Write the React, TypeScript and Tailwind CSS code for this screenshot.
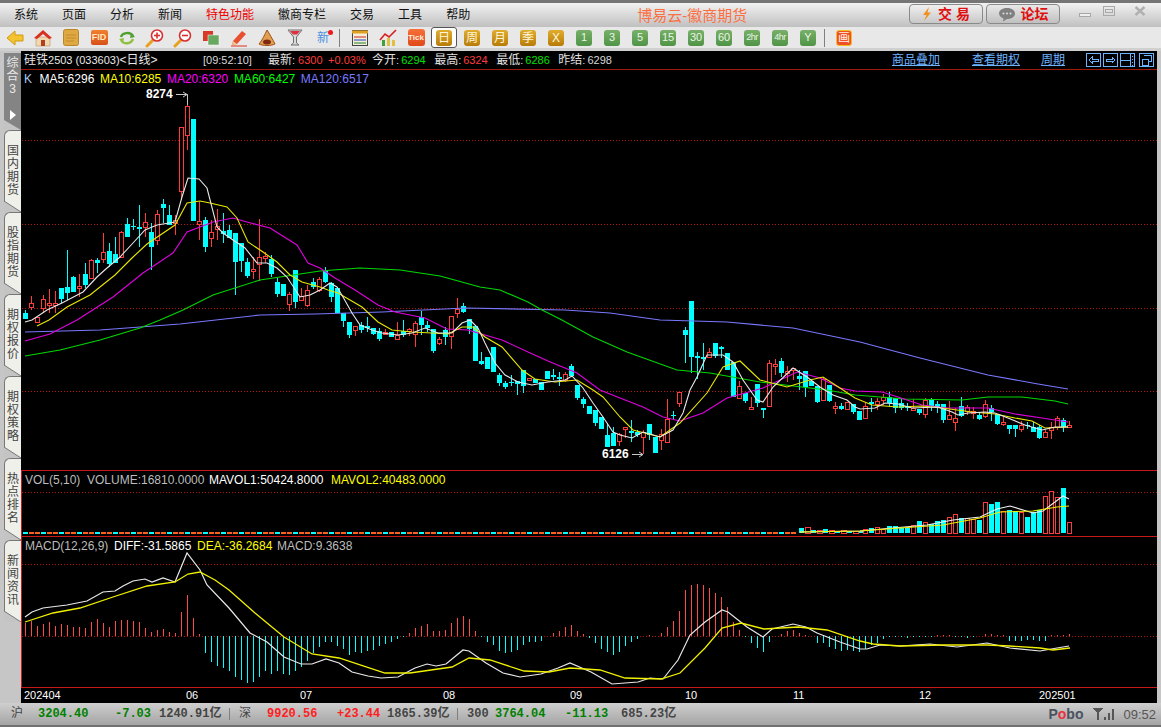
import React from 'react';

type Row = [string, number, number, number, number];
type Candle = { x: number; kind: string; top: number; bot: number; hi: number; lo: number };

// 行情数据,按截图放大坐标抄录: 每段给起始 x 与 y 偏移
const seg = (startX: number, y0: number, rows: Row[]): Candle[] =>
    rows.map((r, i) => ({
        x: startX + i * 6,
        kind: r[0],
        top: y0 + r[1] / 3,
        bot: y0 + r[2] / 3,
        hi: y0 + r[3] / 3,
        lo: y0 + r[4] / 3,
    }));

const candles: Candle[] = [
    ...seg(25, 100, [
        ['c', 640, 658, 630, 658], ['r', 610, 623, 588, 630], ['r', 652, 668, 652, 668], ['r', 598, 625, 585, 640],
        ['r', 610, 615, 568, 640], ['r', 610, 615, 572, 640], ['c', 565, 597, 565, 610], ['c', 560, 578, 450, 600],
        ['c', 530, 575, 527, 575], ['r', 558, 566, 522, 590], ['c', 522, 555, 490, 565], ['r', 482, 535, 478, 535],
        ['c', 480, 488, 475, 520], ['r', 457, 478, 400, 490], ['c', 453, 492, 430, 500], ['c', 462, 490, 410, 490],
        ['r', 397, 472, 393, 475], ['c', 372, 410, 355, 410], ['c', 378, 381, 358, 390], ['c', 381, 388, 315, 440],
        ['r', 367, 382, 340, 410], ['c', 396, 440, 370, 510], ['r', 343, 421, 330, 435], ['c', 312, 323, 297, 370],
        ['c', 346, 374, 315, 375], ['r', 362, 369, 345, 405], ['r', 82, 275, 82, 300], ['r', 20, 106, -18, 150],
        ['c', 57, 362, 57, 362], ['r', 365, 373, 305, 420], ['c', 360, 442, 350, 455], ['r', 397, 415, 360, 440],
        ['r', 380, 387, 328, 420], ['c', 393, 403, 340, 428], ['c', 390, 413, 375, 415], ['c', 400, 485, 400, 585],
        ['c', 430, 484, 430, 515], ['c', 485, 527, 475, 535], ['r', 508, 513, 470, 537], ['r', 472, 492, 357, 543],
        ['r', 468, 475, 455, 488], ['c', 477, 522, 465, 530], ['c', 546, 582, 535, 590], ['c', 552, 587, 552, 587],
        ['r', 582, 613, 575, 632], ['c', 510, 605, 510, 625], ['r', 588, 602, 565, 603], ['r', 571, 617, 555, 620],
        ['c', 545, 562, 535, 568], ['r', 538, 570, 530, 575],
    ]),
    ...seg(325, 290, [
        ['c', -60, -25, -70, -20], ['c', -20, 22, -25, 35], ['c', -5, 68, -10, 68], ['c', 70, 93, 70, 110],
        ['c', 95, 135, 95, 143], ['r', 108, 122, 108, 137], ['c', 104, 120, 95, 128], ['c', 108, 114, 82, 125],
        ['c', 113, 133, 113, 135], ['c', 122, 148, 115, 153], ['r', 127, 133, 116, 135], ['c', 127, 140, 127, 140],
        ['r', 135, 149, 96, 150], ['c', 124, 135, 90, 140], ['r', 117, 122, 113, 138], ['r', 100, 134, 93, 170],
        ['c', 82, 105, 62, 135], ['c', 105, 115, 92, 125], ['c', 118, 183, 118, 188], ['r', 147, 159, 140, 165],
        ['c', 120, 140, 112, 165], ['r', 79, 140, 79, 177], ['r', 57, 71, 24, 85], ['c', 48, 65, 40, 68],
        ['c', 88, 118, 88, 132], ['c', 108, 212, 108, 212], ['c', 213, 221, 186, 225], ['c', 201, 237, 201, 237],
        ['c', 171, 245, 171, 245], ['c', 255, 278, 250, 288], ['c', 279, 291, 272, 297], ['c', 276, 279, 255, 287],
        ['c', 272, 282, 272, 315], ['c', 240, 288, 240, 308], ['r', 264, 272, 264, 272], ['c', 267, 278, 267, 278],
        ['c', 275, 300, 275, 300], ['c', 244, 267, 244, 267], ['c', 255, 261, 237, 270], ['c', 262, 268, 247, 288],
    ]),
    ...seg(565, 290, [
        ['r', 253, 270, 247, 275], ['c', 229, 258, 222, 262], ['c', 286, 324, 286, 330], ['c', 328, 342, 322, 354],
        ['c', 348, 372, 348, 372], ['c', 360, 400, 360, 408], ['c', 381, 416, 381, 416], ['c', 435, 470, 400, 470],
        ['c', 428, 467, 412, 468], ['r', 432, 455, 428, 467], ['r', 412, 417, 412, 445], ['c', 424, 428, 390, 455],
        ['c', 427, 436, 420, 440], ['r', 428, 443, 420, 493], ['c', 403, 436, 403, 450], ['c', 440, 488, 440, 488],
        ['r', 432, 452, 418, 480], ['r', 388, 458, 328, 458], ['c', 375, 377, 362, 386], ['r', 306, 339, 306, 352],
        ['c', 120, 134, 112, 218], ['c', 33, 200, 33, 250], ['c', 198, 205, 185, 268], ['c', 202, 206, 158, 240],
        ['r', 188, 203, 175, 205], ['c', 160, 198, 160, 205], ['c', 171, 178, 168, 205], ['c', 190, 240, 190, 240],
        ['c', 215, 320, 215, 320], ['r', 289, 326, 272, 326], ['c', 310, 333, 310, 340], ['r', 352, 356, 322, 356],
        ['c', 282, 340, 282, 352], ['c', 353, 360, 353, 383], ['r', 220, 348, 210, 348], ['r', 223, 230, 208, 256],
        ['c', 213, 250, 205, 262], ['r', 244, 250, 228, 275], ['r', 236, 240, 235, 270], ['c', 258, 268, 240, 300],
        ['c', 243, 290, 243, 322], ['c', 272, 288, 272, 288], ['c', 288, 336, 288, 340], ['r', 268, 331, 262, 331],
        ['c', 285, 333, 285, 335], ['r', 350, 352, 335, 372], ['c', 347, 357, 340, 360], ['r', 337, 358, 337, 360],
        ['c', 342, 365, 342, 372], ['c', 362, 390, 362, 390],
    ]),
    ...seg(865, 375, [
        ['r', 94, 130, 80, 130], ['c', 82, 88, 68, 110], ['r', 80, 88, 70, 105], ['r', 66, 76, 57, 90],
        ['c', 65, 85, 52, 95], ['c', 68, 98, 68, 115], ['c', 85, 100, 72, 105], ['c', 97, 100, 85, 107],
        ['r', 100, 104, 72, 108], ['c', 102, 115, 102, 120], ['r', 76, 118, 70, 128], ['c', 75, 92, 70, 107],
        ['c', 88, 100, 78, 115], ['c', 88, 135, 88, 143], ['r', 120, 133, 78, 133], ['r', 130, 143, 100, 167],
        ['c', 94, 122, 67, 125], ['r', 98, 108, 90, 120], ['r', 108, 112, 95, 132], ['c', 120, 132, 110, 135],
        ['r', 88, 125, 75, 130], ['c', 100, 112, 90, 137], ['c', 117, 147, 117, 150], ['r', 142, 149, 125, 152],
        ['c', 150, 162, 150, 177], ['c', 150, 162, 150, 186], ['r', 152, 164, 138, 172], ['c', 151, 154, 140, 162],
        ['c', 155, 170, 140, 172], ['c', 155, 190, 150, 192], ['r', 171, 187, 165, 187], ['r', 158, 165, 140, 192],
        ['r', 131, 157, 124, 165], ['c', 136, 157, 128, 172], ['r', 151, 154, 138, 160],
    ]),
];

const ma5 = '25,322 32,320 47,310 62,303 83,292 97,277 107,268 120,257 133,243 145,230 157,225 175,222 182,197 188,178 199,179 207,188 217,227 223,233 233,240 245,248 257,263 267,263 277,268 287,277 300,297 310,295 320,290 330,283 337,287 343,297 352,313 360,325 372,330 382,333 398,335 412,333 425,328 438,333 452,333 462,323 470,320 478,328 485,343 495,363 505,375 518,382 532,385 548,382 565,380 572,376 583,388 593,403 603,417 613,432 620,435 632,438 643,432 660,437 673,430 683,413 690,390 697,377 707,355 723,355 733,362 743,380 757,400 763,402 773,387 793,368 807,377 820,387 833,395 847,400 855,407 860,409 875,408 885,403 898,404 912,408 938,407 952,412 958,415 968,413 985,412 995,413 1008,418 1025,425 1042,430 1055,427 1068,427';
const ma10 = '37,326 49,320 67,307 90,295 115,275 132,258 147,244 175,225 187,203 200,201 210,203 227,207 237,218 248,242 263,252 277,262 290,275 302,282 320,287 328,290 338,293 362,307 378,322 392,330 412,332 432,333 448,334 462,327 473,327 485,337 502,347 522,370 535,379 555,382 577,380 593,390 603,397 620,417 633,430 660,437 680,423 707,393 723,367 740,361 760,380 787,387 810,380 823,377 840,388 855,398 872,405 898,407 922,406 942,408 972,412 995,414 1015,418 1032,421 1045,428 1068,427';
const ma20 = '25,341 50,334 77,320 113,297 143,273 173,253 187,232 213,222 233,218 247,222 270,228 297,245 308,263 320,268 335,278 355,290 378,305 395,312 425,318 447,329 468,330 502,340 528,352 548,361 577,373 600,390 620,398 643,407 663,417 680,421 703,413 727,398 763,388 797,372 820,378 840,388 855,391 882,392 898,397 922,405 948,408 988,408 1015,414 1042,418 1068,422';
const ma60 = '25,356 60,350 100,340 140,328 160,320 183,310 213,295 260,280 320,271 360,268 400,270 440,276 480,287 500,290 528,302 542,310 560,319 593,337 627,352 677,370 710,373 760,382 827,390 855,395 905,399 962,400 988,397 1022,397 1055,401 1068,404';
const ma120 = '25,332 100,330 180,324 260,315 315,314 382,312 465,308 565,310 610,313 660,320 727,322 793,328 860,342 920,358 988,375 1038,384 1068,389';

const volWhite = '800,532 860,531 893,528 927,525 953,520 980,517 997,509 1010,506 1033,513 1043,511 1063,496 1069,499';
const volYellow = '800,532 860,531 900,528 943,525 980,518 1000,512 1033,511 1057,507 1069,506';

const diff = '25,617 32,612 43,608 67,605 87,601 103,592 115,591 123,586 133,581 145,579 152,582 163,578 175,582 187,553 200,570 207,585 229,608 250,633 267,642 284,657 301,664 312,664 326,659 339,663 352,672 368,676 381,678 398,677 415,668 427,664 436,666 446,664 463,650 469,651 486,663 503,673 520,677 541,674 558,668 570,663 591,672 612,684 638,682 650,678 663,679 678,660 690,635 705,622 722,610 728,612 747,627 763,637 772,629 793,624 806,627 817,633 840,642 860,649 867,649 880,645 900,646 930,644 957,647 987,643 1010,648 1040,651 1057,648 1069,646';
const dea = '25,622 53,613 80,608 113,597 147,586 175,582 188,574 200,572 215,580 229,590 255,613 284,637 312,654 339,658 385,673 410,673 452,667 469,658 490,660 524,671 549,672 570,668 600,670 625,678 661,679 680,673 705,648 722,628 741,623 764,629 798,627 827,630 860,641 873,644 900,646 943,645 987,645 1010,646 1040,648 1053,650 1070,648';

// MACD 柱: x=25 起的高度(像素)
const macdHead = [13, 15, 10, 12, 14, 10, 12, 11, 9, 9, 8, 14, 17, 13, 9, 15, 16, 16, 15, 14, 8, 4, 6, 7, 4, 3, 24, 41, 18, 2];
const macdMid = [218, 243, 255, 262, 272, 290, 298, 308, 303, 288, 272, 280, 270, 280, 282, 272, 258, 240, 218, 198, 185, 184, 195, 205, 222, 215, 218, 210, 207, 195, 190, 183, 175, 168, 158, 143, 137, 131, 150, 150, 147, 128, 112, 105, 116, 150, 170, 185, 192, 210, 218, 213, 207, 192, 185, 183, 180, 167, 156, 150, 140, 134, 150, 160, 173, 187, 205, 215, 222, 215, 195, 185, 175, 166, 163, 165, 158, 138, 120, 90, 27, 12, 9, 13, 22, 38, 49, 78, 123, 147, 170, 188, 203, 215, 183, 165, 160, 152, 148, 158, 163, 165, 188, 188, 198, 205, 210, 208, 210, 215].map((z) => (166 - z) / 3);
const macdTail = [-13, -9, -7, -3, -1, -1, -1, -2, -1, -1, -1, -1, 1, 1, 1, -1, -1, -2, -1, 0, 2, 2, 1, 1, -5, -5, -5, -4, -4, -5, -5, 1, 1, 1, 2];
const macdBars = [...macdHead, ...macdMid, ...macdTail];

// 成交量: x=795 起的高度
const volEarly = [5, 6, 3, 3, 4, 3, 2, 3, 2, 2, 2];
const volLate: [string, number][] = [['r', 178], ['c', 174], ['r', 172], ['r', 177], ['c', 168], ['c', 168], ['c', 172], ['c', 172], ['r', 166], ['c', 153], ['r', 157], ['c', 162], ['c', 153], ['c', 150], ['r', 142], ['r', 133], ['c', 142], ['r', 145], ['r', 147], ['c', 148], ['r', 97], ['c', 102], ['c', 96], ['r', 122], ['c', 120], ['c', 122], ['r', 127], ['c', 140], ['c', 125], ['c', 118], ['r', 79], ['r', 64], ['r', 82], ['c', 54], ['r', 157]];

const RED = '#ff3c3c';
const CYAN = '#00ffff';

const GridLine = ({ y }: { y: number }) => (
    <line x1="22" x2="1157" y1={y + 0.5} y2={y + 0.5} stroke="#b81414" strokeDasharray="1 2" shapeRendering="crispEdges" />
);

const Line = ({ points, color, width = 1.1 }: { points: string; color: string; width?: number }) => (
    <polyline points={points} fill="none" stroke={color} strokeWidth={width} />
);

const CandleMark = ({ c }: { c: Candle }) => {
    const mid = c.x + 0.5;
    if (c.kind === 'c') {
        return (
            <g shapeRendering="crispEdges">
                <line x1={mid} x2={mid} y1={c.hi} y2={c.lo} stroke={CYAN} />
                <rect x={c.x - 2} y={c.top} width="5" height={Math.max(c.bot - c.top, 1)} fill={CYAN} />
            </g>
        );
    }
    return (
        <g shapeRendering="crispEdges">
            <line x1={mid} x2={mid} y1={c.hi} y2={c.top} stroke={RED} />
            <line x1={mid} x2={mid} y1={c.bot} y2={c.lo} stroke={RED} />
            <rect x={c.x - 1.5} y={c.top} width="4" height={Math.max(c.bot - c.top, 2)} fill="#000" stroke={RED} />
        </g>
    );
};

const menus = ['系统', '页面', '分析', '新闻', '特色功能', '徽商专栏', '交易', '工具', '帮助'];

const IconBox = ({ children }: { children: React.ReactNode }) => (
    <div className="flex h-[22px] w-[28px] shrink-0 items-center justify-center">{children}</div>
);

const Gold = ({ t, active }: { t: string; active?: boolean }) => (
    <div className={active ? 'mx-px flex h-[21px] w-[26px] shrink-0 items-center justify-center rounded-[3px] border border-[#555] bg-white' : 'flex h-[22px] w-[28px] shrink-0 items-center justify-center'}>
        <div className="flex h-[16px] w-[16px] items-center justify-center rounded-[3px] bg-gradient-to-b from-[#e0ad2c] to-[#b87c08] text-[12px] leading-none text-[#fff6d8]">{t}</div>
    </div>
);

const Green = ({ t }: { t: string }) => (
    <IconBox>
        <div className={t.length > 2 ? 'flex h-[16px] w-[16px] items-center justify-center rounded-[3px] bg-gradient-to-b from-[#78b068] to-[#4f9447] text-[9px] leading-none tracking-[-0.5px] text-[#eaf5e4]' : 'flex h-[16px] w-[16px] items-center justify-center rounded-[3px] bg-gradient-to-b from-[#78b068] to-[#4f9447] text-[11px] leading-none text-[#eaf5e4]'}>{t}</div>
    </IconBox>
);

const Magnifier = ({ plus }: { plus?: boolean }) => (
    <svg width="20" height="20" viewBox="0 0 20 20">
        <path d="M8 12 L2 18" stroke="#e8a020" strokeWidth="3" strokeLinecap="round" />
        <circle cx="12" cy="7.5" r="5.5" fill="#fff" stroke="#d83030" strokeWidth="1.6" />
        <path d="M9 7.5 H15" stroke="#d83030" strokeWidth="1.6" />
        {plus && <path d="M12 4.5 V10.5" stroke="#d83030" strokeWidth="1.6" />}
    </svg>
);

const Toolbar = () => (
    <div className="flex h-[21px] items-center bg-[#e8e8e8] pl-px">
        <IconBox>
            <svg width="18" height="16" viewBox="0 0 18 16"><path d="M1 8 L9 1 V5 H17 V11 H9 V15 Z" fill="#f4c430" stroke="#d09a10" /></svg>
        </IconBox>
        <IconBox>
            <svg width="20" height="18" viewBox="0 0 20 18"><path d="M3 8 V17 H17 V8 Z" fill="#f0d8b0" stroke="#c09060" strokeWidth="0.6" /><rect x="8" y="11" width="4" height="6" fill="#b04020" /><path d="M1 9 L10 1 L19 9 L16 10 L10 5 L4 10 Z" fill="#d83020" /></svg>
        </IconBox>
        <IconBox>
            <svg width="16" height="17" viewBox="0 0 16 17"><rect x="0.5" y="0.5" width="15" height="16" rx="2" fill="#e0a840" stroke="#b8862a" /><path d="M3 6 H13 M3 9 H13 M3 12 H11" stroke="#c08c30" /></svg>
        </IconBox>
        <IconBox>
            <div className="flex h-[15px] w-[17px] items-center justify-center rounded-[2px] bg-gradient-to-b from-[#f08030] to-[#d85018] text-[9px] font-bold leading-none text-[#ffe8c0]">FID</div>
        </IconBox>
        <IconBox>
            <svg width="18" height="16" viewBox="0 0 18 16" fill="none" strokeWidth="2.4"><path d="M3 7 C4 3 12 1 15 6" stroke="#50a030" /><path d="M15 9 C13 14 6 15 3 10" stroke="#90c040" /><path d="M13 3 L17 7 L12 8 Z" fill="#50a030" /><path d="M5 13 L1 9 L6 8 Z" fill="#90c040" /></svg>
        </IconBox>
        <IconBox><Magnifier plus /></IconBox>
        <IconBox><Magnifier /></IconBox>
        <IconBox>
            <svg width="18" height="16" viewBox="0 0 18 16"><rect x="1" y="1" width="10" height="10" fill="#d83828" /><rect x="6" y="5" width="11" height="10" fill="#68a860" stroke="#fff" strokeWidth="0.5" /></svg>
        </IconBox>
        <IconBox>
            <svg width="18" height="18" viewBox="0 0 18 18"><path d="M3 12 L12 2 L16 5 L7 15 L2 16 Z" fill="#e85030" /><path d="M3 12 L7 15 L2 16 Z" fill="#f0c890" /><path d="M1 17 H17" stroke="#e03020" /></svg>
        </IconBox>
        <IconBox>
            <svg width="18" height="18" viewBox="0 0 18 18"><path d="M9 1 C11 4 15 11 17 15 C13 17 5 17 1 15 C4 12 7 5 9 1 Z" fill="#e0a050" stroke="#a05018" /><ellipse cx="9" cy="13" rx="4" ry="2.5" fill="#802810" /></svg>
        </IconBox>
        <IconBox>
            <svg width="16" height="17" viewBox="0 0 16 17"><path d="M1 1 H15 L9.5 8 V14 L12 16 H4 L6.5 14 V8 Z" fill="#d8d8d8" stroke="#707070" /><path d="M3 2 H13 L10 5.5 H6 Z" fill="#e03040" /></svg>
        </IconBox>
        <IconBox>
            <div className="relative text-[12px] leading-none text-[#4a90e0]">
                新
                <div className="absolute -right-[4px] -top-[2px] h-[5px] w-[5px] rounded-full bg-[#f01818]" />
            </div>
        </IconBox>
        <div className="ml-[2px] mr-[6px] h-[18px] w-px bg-[#808080]" />
        <IconBox>
            <svg width="16" height="16" viewBox="0 0 16 16"><rect x="0.5" y="0.5" width="15" height="15" fill="#f4f0d8" stroke="#444" /><path d="M0 2 H16" stroke="#e0a020" strokeWidth="3" /><path d="M2 7 H14" stroke="#d02020" /><path d="M2 10 H14" stroke="#2040c0" /><path d="M2 13 H14" stroke="#208030" /></svg>
        </IconBox>
        <IconBox>
            <svg width="18" height="17" viewBox="0 0 18 17"><rect x="3" y="11" width="3" height="6" fill="#40a040" /><rect x="8" y="9" width="3" height="8" fill="#e0c040" /><rect x="13" y="11" width="3" height="6" fill="#e0c040" /><path d="M1 11 L6 5 L10 8 L17 1" fill="none" stroke="#d82020" strokeWidth="1.6" /></svg>
        </IconBox>
        <IconBox>
            <div className="flex h-[17px] w-[17px] items-center justify-center rounded-[3px] bg-gradient-to-b from-[#f87038] to-[#e04818] text-[8px] font-bold leading-none text-[#fff0e0]">Tick</div>
        </IconBox>
        <Gold t="日" active />
        {['周', '月', '季', 'X'].map((t) => (
            <Gold key={t} t={t} />
        ))}
        {['1', '3', '5', '15', '30', '60', '2hr', '4hr', 'Y'].map((t) => (
            <Green key={t} t={t} />
        ))}
        <div className="ml-[2px] mr-[5px] h-[18px] w-px bg-[#808080]" />
        <IconBox>
            <div className="flex h-[16px] w-[16px] items-center justify-center rounded-[3px] border border-[#f0c020] bg-[#f05028] text-[12px] leading-none text-[#fff0e0]">画</div>
        </IconBox>
    </div>
);

const MenuBar = () => (
    <div className="flex h-[24px] items-center bg-gradient-to-b from-[#f2f2f2] to-[#c0c0c0] pl-[14px]">
        <div className="flex gap-[24px] text-[12px] text-[#111]">
            {menus.map((m) => (
                <span key={m} className={m === '特色功能' ? 'text-[#f00000]' : ''}>{m}</span>
            ))}
        </div>
        <div className="ml-[167px] text-[15px] leading-none text-[#fb7043]">博易云-徽商期货</div>
        <div className="ml-auto flex items-center pb-[2px]">
            <div className="flex h-[20px] w-[74px] items-center justify-center gap-[6px] rounded-[4px] border border-[#8a8a8a] bg-gradient-to-b from-[#f0f0f0] to-[#c8c8c8] text-[14px] font-bold leading-none text-[#e01010]">
                <svg width="10" height="14" viewBox="0 0 10 14"><path d="M7 0 L1 8 H4.5 L2 14 L9 5.5 H5.5 Z" fill="#f09020" /></svg>
                <span>交 易</span>
            </div>
            <div className="ml-[3px] flex h-[20px] w-[74px] items-center justify-center gap-[5px] rounded-[4px] border border-[#8a8a8a] bg-gradient-to-b from-[#e8e8e8] to-[#c0c0c0] text-[14px] font-bold leading-none text-[#e01010]">
                <svg width="18" height="15" viewBox="0 0 18 15"><path d="M9 1 C14 1 17 3.5 17 6.5 C17 9.5 14 12 9 12 L5 14.5 L5.5 11.5 C3 10.5 1 8.8 1 6.5 C1 3.5 4 1 9 1 Z" fill="#808080" /><circle cx="5.5" cy="6.5" r="1" fill="#e0e0e0" /><circle cx="9" cy="6.5" r="1" fill="#e0e0e0" /><circle cx="12.5" cy="6.5" r="1" fill="#e0e0e0" /></svg>
                <span>论坛</span>
            </div>
            <div className="ml-[19px] mr-[15px] flex items-start gap-[12px]">
                <div className="mt-[7px] h-[4px] w-[12px] border border-[#a8a8a8] bg-[#eee]" />
                <div className="mb-[6px] flex h-[10px] w-[12px] items-center justify-center border border-[#a8a8a8]"><div className="h-[4px] w-[8px] border border-[#a8a8a8]" /></div>
                <svg className="ml-[7px]" width="12" height="10" viewBox="0 0 12 10"><path d="M1.5 1 L10.5 9 M10.5 1 L1.5 9" stroke="#b0b0b0" strokeWidth="2.4" /></svg>
            </div>
        </div>
    </div>
);

const Fold = () => (
    <svg className="absolute -left-px bottom-0" width="17" height="11" viewBox="0 0 17 11">
        <path d="M0 0 L17 11 H0 Z" fill="#c4c4c4" />
        <path d="M0 0 L17 11" stroke="#777" />
    </svg>
);

const SideTab = ({ text }: { text: string }) => (
    <div className="relative flex h-[82px] w-[17px] flex-col items-center rounded-tl-[6px] border-l border-t border-[#777] bg-[#f0f0ea] pt-[14px] text-[12px] leading-[13px] text-[#444]">
        {text.split('').map((ch, i) => (
            <span key={i}>{ch}</span>
        ))}
        <Fold />
    </div>
);

const Sidebar = () => (
    <div className="flex w-[21px] shrink-0 flex-col bg-[#c6c6c6] pl-[4px] pt-[2px]">
        <div className="relative flex h-[77px] w-[17px] flex-col items-center bg-[#848484] pt-[4px] text-[12px] leading-[13px] text-[#e8e8e8]">
            <span>综</span>
            <span>合</span>
            <span>3</span>
            <svg className="mt-[14px]" width="6" height="10" viewBox="0 0 6 10"><path d="M0 0 L6 5 L0 10 Z" fill="#fff" /></svg>
            <svg className="absolute bottom-0 left-0" width="17" height="10" viewBox="0 0 17 10"><path d="M0 0 L17 10 H0 Z" fill="#c4c4c4" /></svg>
        </div>
        {['国内期货', '股指期货', '期权报价', '期权策略', '热点排名', '新闻资讯'].map((t) => (
            <SideTab key={t} text={t} />
        ))}
    </div>
);

const BlueBox = ({ children }: { children: React.ReactNode }) => (
    <svg width="15" height="14" viewBox="0 0 15 14" fill="none" stroke="#6db4ff" shapeRendering="crispEdges">
        <rect x="0.5" y="0.5" width="14" height="13" />
        {children}
    </svg>
);

const Label = ({ children }: { children: React.ReactNode }) => <span className="text-[12px] text-[#e0e0e0]">{children}</span>;

const QuoteHeader = () => (
    <div className="flex h-[19px] items-center border-b border-[#a01808] pl-[3px] pr-[3px] text-[11px] leading-none text-[#d8d8d8]">
        <span className="w-[179px] text-[11px] text-[#e8e8e8]">
            <span className="text-[12px]">硅铁</span>2503 (033603)<span className="text-[12px]">&lt;日线&gt;</span>
        </span>
        <span className="w-[65px]">[09:52:10]</span>
        <Label>最新</Label>:<span className="ml-[3px] w-[30px] text-[#ff3c3c]">6300</span>
        <span className="w-[44px] text-[#ff3c3c]">+0.03%</span>
        <Label>今开</Label>:<span className="ml-[2px] w-[33px] text-[#00e000]">6294</span>
        <Label>最高</Label>:<span className="ml-[2px] w-[33px] text-[#ff3c3c]">6324</span>
        <Label>最低</Label>:<span className="ml-[2px] w-[33px] text-[#00e000]">6286</span>
        <Label>昨结</Label>:<span className="ml-[2px]">6298</span>
        <div className="ml-auto flex items-center text-[12px] text-[#6db4ff]">
            <span className="underline">商品叠加</span>
            <span className="ml-[32px] underline">查看期权</span>
            <span className="ml-[21px] underline">周期</span>
            <div className="ml-[21px] flex gap-[2px]">
                <BlueBox><path d="M3 7 L6 4 V6 H12 V8 H6 V10 Z" /></BlueBox>
                <BlueBox><path d="M12 7 L9 4 V6 H3 V8 H9 V10 Z" /></BlueBox>
                <BlueBox><path d="M0 7 H10 M10 0 V14 M12 3 H13 M12 6 H13 M12 9 H13 M12 12 H13" /></BlueBox>
            </div>
            <div className="ml-[4px]">
                <BlueBox><path d="M5 2 H12 V8 H9 M3 6 H9 V12 H3 Z" /></BlueBox>
            </div>
        </div>
    </div>
);

const MainPane = () => (
    <div className="relative h-[400px]">
        <svg className="absolute inset-0 h-full w-full" viewBox="21 70 1136 400">
            <GridLine y={140} />
            <GridLine y={224} />
            <GridLine y={308} />
            <GridLine y={391} />
            {candles.map((c) => (
                <CandleMark key={c.x} c={c} />
            ))}
            <Line points={ma120} color="#7878ff" />
            <Line points={ma60} color="#00d800" />
            <Line points={ma20} color="#e000e0" />
            <Line points={ma10} color="#e8e800" />
            <Line points={ma5} color="#e8e8e8" />
            <path d="M176 94.5 H187.5 V105 M183 92 L187 94.5 L183 97" fill="none" stroke="#c8c8c8" />
            <path d="M632 454.5 H643 M639 452 L643 454.5 L639 457" fill="none" stroke="#c8c8c8" />
        </svg>
        <div className="relative flex gap-[5.6px] pl-[3px] pt-px text-[12px] leading-[17px]">
            <span className="mr-[2px] text-[#a8c8e8]">K</span>
            <span className="text-white">MA5:6296</span>
            <span className="text-[#ffff00]">MA10:6285</span>
            <span className="text-[#ff00ff]">MA20:6320</span>
            <span className="text-[#00ff00]">MA60:6427</span>
            <span className="text-[#7a7aff]">MA120:6517</span>
        </div>
        <span className="absolute left-[125px] top-[18px] text-[12px] font-bold leading-none text-white">8274</span>
        <span className="absolute left-[581px] top-[378px] text-[12px] font-bold leading-none text-white">6126</span>
    </div>
);

const VolPane = () => (
    <div className="relative h-[66px] border-l border-t border-[#c81818]">
        <svg className="absolute -left-px -top-px h-[66px] w-[1136px]" viewBox="21 470 1136 66" shapeRendering="crispEdges">
            <GridLine y={492} />
            {Array.from({ length: 129 }).map((_, i) => (
                <rect key={i} x={23 + i * 6} y="532" width="5" height="1.5" fill={i % 3 === 0 ? CYAN : '#ff6020'} />
            ))}
            {volEarly.map((h, i) => (
                <rect key={i} x={799 + i * 6} y={533 - h} width="5" height={h} fill={i % 2 ? '#000' : CYAN} stroke={i % 2 ? RED : 'none'} />
            ))}
            {volLate.map(([k, z], i) => {
                const h = (188 - z) / 3;
                const x = 863 + i * 6;
                return k === 'c' ? (
                    <rect key={i} x={x} y={533 - h} width="5" height={h} fill={CYAN} />
                ) : (
                    <rect key={i} x={x + 0.5} y={533 - h} width="4" height={h} fill="#000" stroke={RED} />
                );
            })}
            <g shapeRendering="auto">
                <Line points={volWhite} color="#f0f0f0" />
                <Line points={volYellow} color="#f0f000" />
            </g>
        </svg>
        <div className="relative flex pl-[3px] pt-px text-[12px] leading-[17px]">
            <span className="w-[62px] text-[#bcbcbc]">VOL(5,10)</span>
            <span className="w-[122px] text-[#bcbcbc]">VOLUME:16810.0000</span>
            <span className="w-[122px] text-white">MAVOL1:50424.8000</span>
            <span className="text-[#ffff00]">MAVOL2:40483.0000</span>
        </div>
    </div>
);

const MacdPane = () => (
    <div className="relative h-[152px] border-b border-l border-t border-[#c81818]">
        <svg className="absolute -left-px -top-px h-[152px] w-[1136px]" viewBox="21 536 1136 152">
            <GridLine y={564} />
            <GridLine y={636} />
            <g shapeRendering="crispEdges">
                {macdBars.map((h, i) => (
                    <line
                        key={i}
                        x1={25.5 + i * 6}
                        x2={25.5 + i * 6}
                        y1={636}
                        y2={636 - h}
                        stroke={h > 0 ? '#ff4848' : CYAN}
                    />
                ))}
            </g>
            <Line points={diff} color="#e8e8e8" width={1.2} />
            <Line points={dea} color="#f0f000" width={1.3} />
        </svg>
        <div className="relative flex pl-[3px] pt-px text-[12px] leading-[17px]">
            <span className="w-[89px] text-[#bcbcbc]">MACD(12,26,9)</span>
            <span className="w-[83px] text-white">DIFF:-31.5865</span>
            <span className="w-[80px] text-[#ffff00]">DEA:-36.2684</span>
            <span className="text-[#bcbcbc]">MACD:9.3638</span>
        </div>
    </div>
);

const axisLabels: [string, number][] = [['202404', 3], ['06', 165], ['07', 279], ['08', 422], ['09', 549], ['10', 664], ['11', 772], ['12', 898], ['202501', 1018]];

const Axis = () => (
    <div className="relative h-[15px] text-[11px] leading-[14px] text-white">
        {axisLabels.map(([t, x]) => (
            <span key={t} className="absolute top-0" style={{ left: x }}>{t}</span>
        ))}
    </div>
);

const StatusNum = ({ w, c, children }: { w: string; c: string; children: React.ReactNode }) => (
    <span className={`${w} ${c}`}>{children}</span>
);

const StatusBar = () => (
    <div className="flex h-[24px] items-center border-b-2 border-[#707070] bg-gradient-to-b from-[#cfcfcf] to-[#a4a4a4] pl-[11px] pr-[5px] font-['Liberation_Mono','Noto_Sans_CJK_SC',monospace] text-[12px] font-bold leading-none">
        <span className="w-[27px] font-normal text-[#444]">沪</span>
        <StatusNum w="w-[77px]" c="text-[#008000]">3204.40</StatusNum>
        <StatusNum w="w-[44px]" c="text-[#008000]">-7.03</StatusNum>
        <StatusNum w="w-[70px]" c="text-[#444]">1240.91亿</StatusNum>
        <div className="mr-[9px] h-[12px] w-px bg-[#808080]" />
        <span className="w-[28px] font-normal text-[#444]">深</span>
        <StatusNum w="w-[70px]" c="text-[#ff2020]">9920.56</StatusNum>
        <StatusNum w="w-[50px]" c="text-[#ff2020]">+23.44</StatusNum>
        <StatusNum w="w-[70px]" c="text-[#444]">1865.39亿</StatusNum>
        <div className="mr-[9px] h-[12px] w-px bg-[#808080]" />
        <StatusNum w="w-[28px]" c="text-[#444]">300</StatusNum>
        <StatusNum w="w-[70px]" c="text-[#008000]">3764.04</StatusNum>
        <StatusNum w="w-[56px]" c="text-[#008000]">-11.13</StatusNum>
        <span className="text-[#444]">685.23亿</span>
        <span className="ml-auto font-['Liberation_Sans',sans-serif] text-[14px] text-[#4a5260]">
            P<span className="text-[#e83040]">o</span>bo
        </span>
        <svg className="ml-[10px]" width="22" height="12" viewBox="0 0 22 12" shapeRendering="crispEdges">
            <path d="M0 0 H10 L6 5 V12 H4 V5 Z" fill="#555" />
            <rect x="11" y="9" width="2" height="3" fill="#555" />
            <rect x="15" y="5" width="2" height="7" fill="#555" />
            <rect x="19" y="1" width="2" height="11" fill="#555" />
        </svg>
        <span className="ml-[8px] font-['Liberation_Sans',sans-serif] text-[13px] font-normal text-[#555]">09:52</span>
    </div>
);

const App: React.FC = () => {
    return (
        <div className="flex h-[727px] w-[1161px] flex-col overflow-hidden border-t-[3px] border-[#757575] bg-[#c6c6c6] font-['Liberation_Sans','Noto_Sans_CJK_SC',sans-serif]">
            <MenuBar />
            <Toolbar />
            <div className="h-[3px] bg-[#d0d0d0]" />
            <div className="flex h-[652px]">
                <Sidebar />
                <div className="flex w-[1136px] flex-col bg-black">
                    <QuoteHeader />
                    <MainPane />
                    <VolPane />
                    <MacdPane />
                    <Axis />
                </div>
            </div>
            <StatusBar />
        </div>
    );
};

export default App;
